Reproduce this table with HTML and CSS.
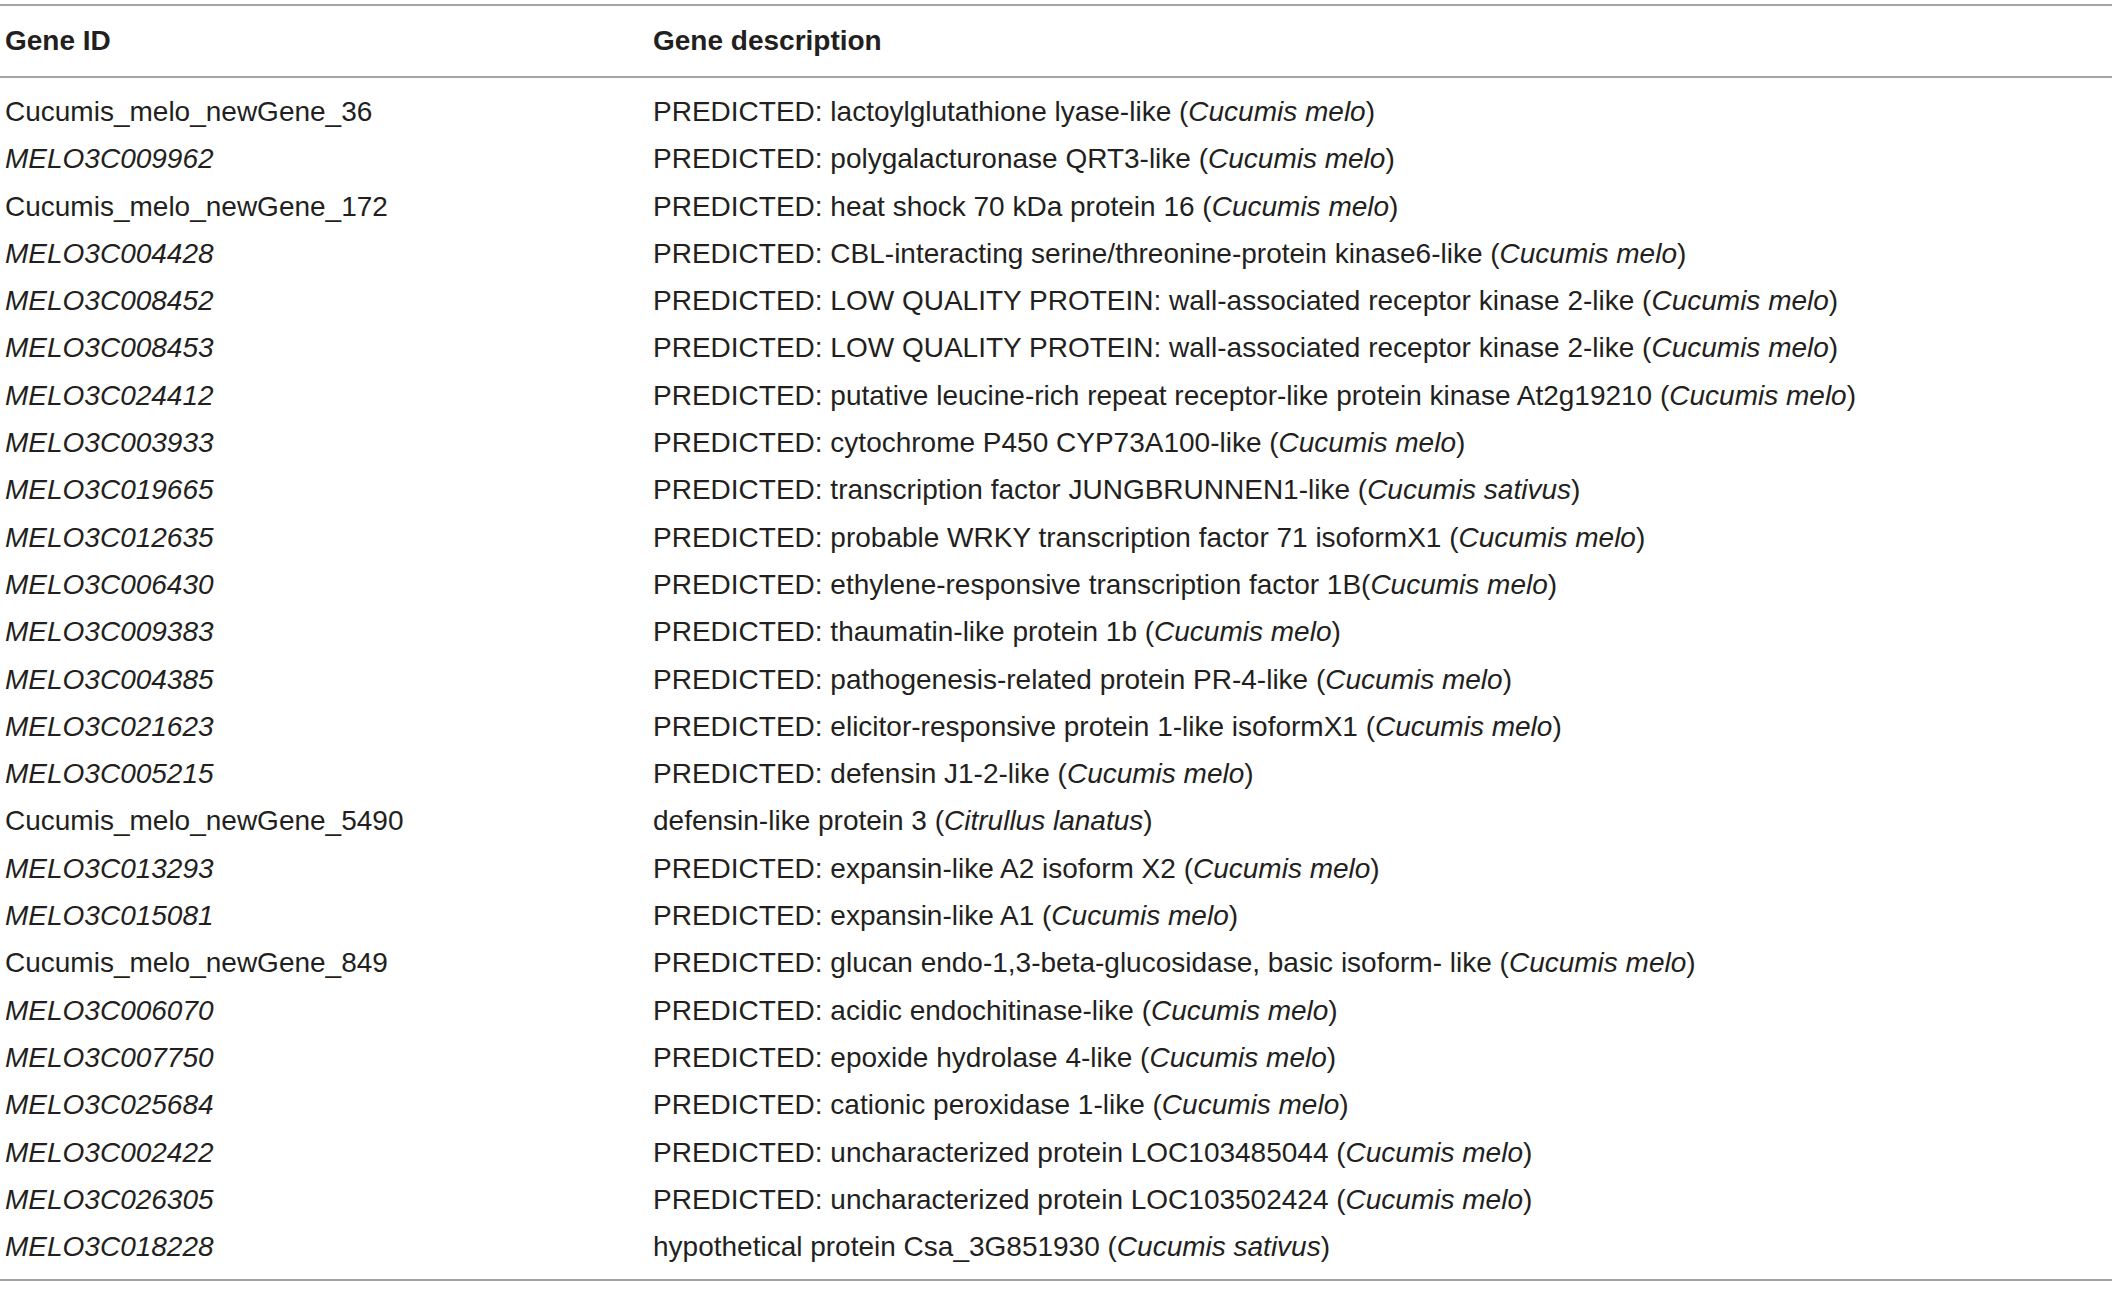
FILE: index.html
```html
<!DOCTYPE html>
<html lang="en">
<head>
  <meta charset="UTF-8">
  <title>Gene list</title>
  <link rel="stylesheet" href="styles.css">
</head>
<body>
  <table class="genes">
    <thead>
      <tr>
        <th class="col-id">Gene ID</th>
        <th>Gene description</th>
      </tr>
    </thead>
    <tbody>
      <tr><td>Cucumis_melo_newGene_36</td><td>PREDICTED: lactoylglutathione lyase-like (<i>Cucumis melo</i>)</td></tr>
      <tr><td><i>MELO3C009962</i></td><td>PREDICTED: polygalacturonase QRT3-like (<i>Cucumis melo</i>)</td></tr>
      <tr><td>Cucumis_melo_newGene_172</td><td>PREDICTED: heat shock 70 kDa protein 16 (<i>Cucumis melo</i>)</td></tr>
      <tr><td><i>MELO3C004428</i></td><td>PREDICTED: CBL-interacting serine/threonine-protein kinase6-like (<i>Cucumis melo</i>)</td></tr>
      <tr><td><i>MELO3C008452</i></td><td>PREDICTED: LOW QUALITY PROTEIN: wall-associated receptor kinase 2-like (<i>Cucumis melo</i>)</td></tr>
      <tr><td><i>MELO3C008453</i></td><td>PREDICTED: LOW QUALITY PROTEIN: wall-associated receptor kinase 2-like (<i>Cucumis melo</i>)</td></tr>
      <tr><td><i>MELO3C024412</i></td><td>PREDICTED: putative leucine-rich repeat receptor-like protein kinase At2g19210 (<i>Cucumis melo</i>)</td></tr>
      <tr><td><i>MELO3C003933</i></td><td>PREDICTED: cytochrome P450 CYP73A100-like (<i>Cucumis melo</i>)</td></tr>
      <tr><td><i>MELO3C019665</i></td><td>PREDICTED: transcription factor JUNGBRUNNEN1-like (<i>Cucumis sativus</i>)</td></tr>
      <tr><td><i>MELO3C012635</i></td><td>PREDICTED: probable WRKY transcription factor 71 isoformX1 (<i>Cucumis melo</i>)</td></tr>
      <tr><td><i>MELO3C006430</i></td><td>PREDICTED: ethylene-responsive transcription factor 1B(<i>Cucumis melo</i>)</td></tr>
      <tr><td><i>MELO3C009383</i></td><td>PREDICTED: thaumatin-like protein 1b (<i>Cucumis melo</i>)</td></tr>
      <tr><td><i>MELO3C004385</i></td><td>PREDICTED: pathogenesis-related protein PR-4-like (<i>Cucumis melo</i>)</td></tr>
      <tr><td><i>MELO3C021623</i></td><td>PREDICTED: elicitor-responsive protein 1-like isoformX1 (<i>Cucumis melo</i>)</td></tr>
      <tr><td><i>MELO3C005215</i></td><td>PREDICTED: defensin J1-2-like (<i>Cucumis melo</i>)</td></tr>
      <tr><td>Cucumis_melo_newGene_5490</td><td>defensin-like protein 3 (<i>Citrullus lanatus</i>)</td></tr>
      <tr><td><i>MELO3C013293</i></td><td>PREDICTED: expansin-like A2 isoform X2 (<i>Cucumis melo</i>)</td></tr>
      <tr><td><i>MELO3C015081</i></td><td>PREDICTED: expansin-like A1 (<i>Cucumis melo</i>)</td></tr>
      <tr><td>Cucumis_melo_newGene_849</td><td>PREDICTED: glucan endo-1,3-beta-glucosidase, basic isoform- like (<i>Cucumis melo</i>)</td></tr>
      <tr><td><i>MELO3C006070</i></td><td>PREDICTED: acidic endochitinase-like (<i>Cucumis melo</i>)</td></tr>
      <tr><td><i>MELO3C007750</i></td><td>PREDICTED: epoxide hydrolase 4-like (<i>Cucumis melo</i>)</td></tr>
      <tr><td><i>MELO3C025684</i></td><td>PREDICTED: cationic peroxidase 1-like (<i>Cucumis melo</i>)</td></tr>
      <tr><td><i>MELO3C002422</i></td><td>PREDICTED: uncharacterized protein LOC103485044 (<i>Cucumis melo</i>)</td></tr>
      <tr><td><i>MELO3C026305</i></td><td>PREDICTED: uncharacterized protein LOC103502424 (<i>Cucumis melo</i>)</td></tr>
      <tr><td><i>MELO3C018228</i></td><td>hypothetical protein Csa_3G851930 (<i>Cucumis sativus</i>)</td></tr>
    </tbody>
  </table>
</body>
</html>
```

FILE: styles.css
```css
body {
  margin: 0;
  background-color: #fff;
  color: #231f20;
  font-family: "Liberation Sans", Arial, sans-serif;
}

.genes {
  width: 2112px;
  margin-top: 4px;
  border-collapse: collapse;
  border-top: 2px solid #a3a3a3;
  border-bottom: 2px solid #a3a3a3;
  font-size: 28px;
}

.genes th {
  text-align: left;
  font-weight: bold;
  line-height: 32px;
  padding: 19px 0 19px 5px;
  border-bottom: 2px solid #a3a3a3;
}

.genes th.col-id {
  width: 643px;
}

.genes td {
  padding: 0 0 0 5px;
  line-height: 47.3px;
  white-space: nowrap;
}

.genes tbody tr:first-child td {
  padding-top: 10px;
}

.genes tbody tr:last-child td {
  padding-bottom: 9px;
}
```
